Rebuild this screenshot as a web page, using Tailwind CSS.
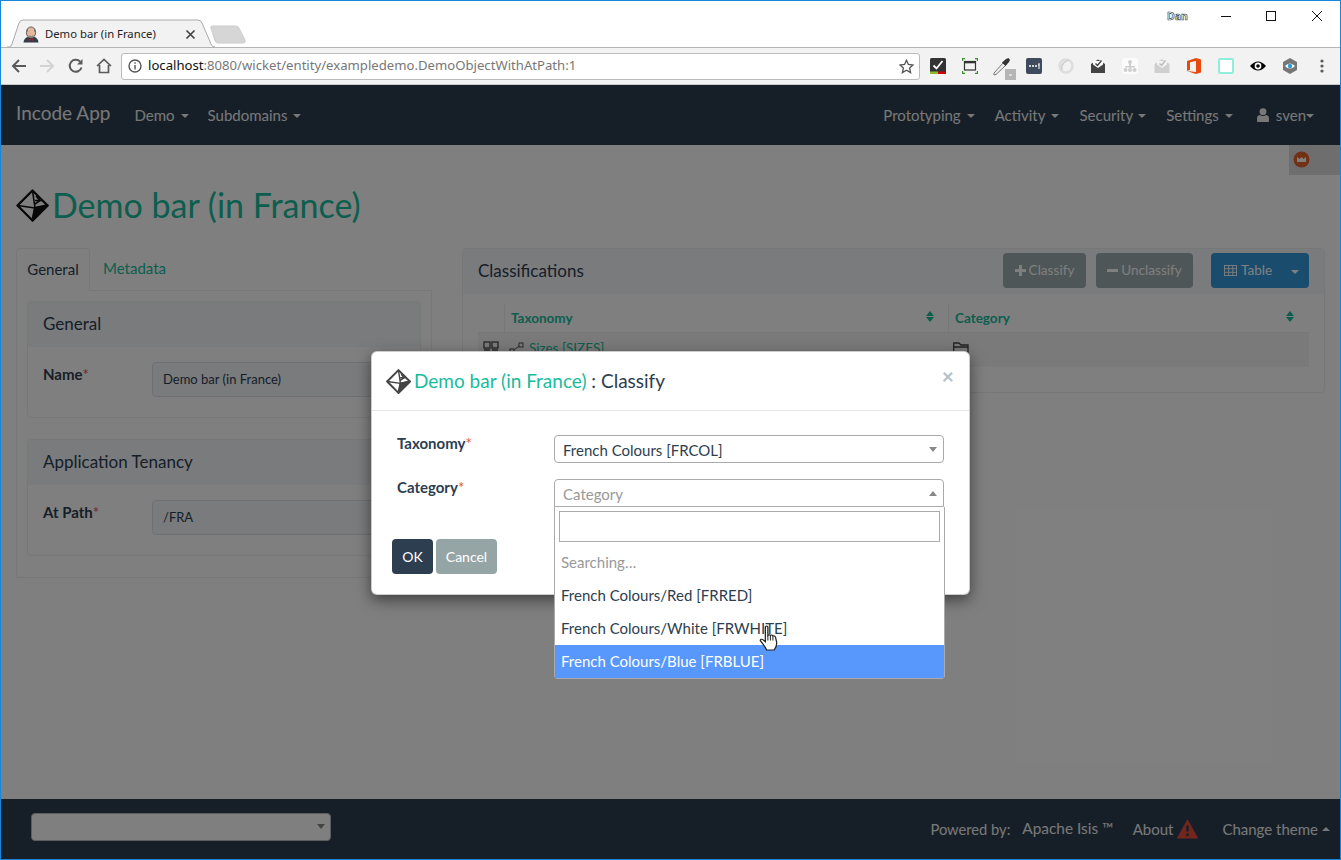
<!DOCTYPE html>
<html lang="en">
<head>
    <meta charset="UTF-8">
    <meta name="viewport" content="width=device-width, initial-scale=1.0">
    <title>Demo bar (in France)</title>
    <script src="https://cdn.jsdelivr.net/npm/@tailwindcss/browser@4"></script>
</head>
<body class="bg-white font-['Lato',sans-serif] text-[15px] text-[#2c3e50] overflow-hidden">

<div class="relative w-[1341px] h-[860px] border border-[#1a86d9] flex flex-col overflow-hidden">

    <!-- Browser title bar -->
    <div class="relative h-[47px] bg-white shrink-0 border-b border-[#b4b4b4]">
        <svg class="absolute left-[6px] top-[18px]" width="240" height="30" viewBox="0 0 240 30">
            <path d="M0 28 L2 28 Q4 28 5 25 L12 4 Q13 1 16 1 L191 1 Q194 1 195 4 L204 25 Q205 28 208 28" fill="#f2f2f2" stroke="#aaa" stroke-width="1"/>
            <path d="M204 9 Q203 7 206 7 L228 7 Q231 7 232 9 L238 21 Q239 24 236 24 L211 24 Q209 24 208 22 Z" fill="#d6d6d6" stroke="#ccc"/>
        </svg>
        <!-- favicon -->
        <svg class="absolute left-[22px] top-[25px]" width="16" height="17" viewBox="0 0 16 17">
            <path d="M0.5 16.5 Q1 12 4.5 11 L11.5 11 Q15 12 15.5 16.5 Z" fill="#2f3c4c"/>
            <ellipse cx="8" cy="6.5" rx="4.6" ry="5.6" fill="#e3b79c" stroke="#444" stroke-width=".8"/>
            <path d="M3.4 7 Q3 3 5 2 L5 5 Z M12.6 7 Q13 3 11 2 L11 5 Z" fill="#777"/>
            <path d="M5.5 9 Q8 11 10.5 9 L10 11.5 L6 11.5 Z" fill="#8d8078"/>
            <path d="M5.5 12.5 L8 13.6 L10.5 12.5 L10.5 15 L8 14 L5.5 15 Z" fill="#b02020"/>
        </svg>
        <span class="absolute left-[44px] top-[25px] font-['Noto_Sans',sans-serif] text-[11.3px] leading-[16px] text-[#222]">Demo bar (in France)</span>
        <svg class="absolute left-[184px] top-[28px]" width="11" height="11" viewBox="0 0 11 11"><path d="M1.5 1.5 L9.5 9.5 M9.5 1.5 L1.5 9.5" stroke="#444" stroke-width="1.7"/></svg>

        <!-- window controls -->
        <span class="absolute left-[1166px] top-[8px] text-[10.5px] leading-[14px] font-['Noto_Sans',sans-serif] font-bold text-white [-webkit-text-stroke:0.6px_#333]">Dan</span>
        <svg class="absolute left-[1220px] top-[9px]" width="102" height="12" viewBox="0 0 102 12" fill="none" stroke="#111">
            <path d="M0 6.5 H10"/>
            <rect x="45.5" y="1.5" width="9" height="9"/>
            <path d="M91 1 L101 11 M101 1 L91 11"/>
        </svg>
    </div>

    <!-- Browser toolbar -->
    <div class="h-[37px] bg-[#f2f2f2] shrink-0 border-b border-[#c8c8c8] flex items-center">
        <div class="w-[120px] flex items-center shrink-0">
            <svg class="ml-[10px]" width="16" height="16" viewBox="0 0 16 16" fill="none" stroke="#5a5a5a" stroke-width="2"><path d="M15 8 H2 M8 2 L2 8 L8 14"/></svg>
            <svg class="ml-[12px]" width="16" height="16" viewBox="0 0 16 16" fill="none" stroke="#d3d3d3" stroke-width="2"><path d="M1 8 H14 M8 2 L14 8 L8 14"/></svg>
            <svg class="ml-[13px]" width="16" height="16" viewBox="0 0 16 16" fill="none" stroke="#5a5a5a" stroke-width="2"><path d="M13.5 9.5 A6 6 0 1 1 12 3.5"/><path d="M14.5 1 V6.5 H9" fill="#5a5a5a" stroke="none"/></svg>
            <svg class="ml-[12px]" width="16" height="16" viewBox="0 0 16 16" fill="none" stroke="#5a5a5a" stroke-width="1.7"><path d="M1 8 L8 1.5 L15 8 M3.5 7 V14.5 H12.5 V7"/></svg>
        </div>
        <div class="w-[799px] h-[27px] bg-white border border-[#bbb] rounded-[3px] flex items-center shrink-0 font-['Noto_Sans',sans-serif] text-[13.15px] relative">
            <svg class="ml-[6px]" width="14" height="14" viewBox="0 0 14 14" fill="none" stroke="#555" stroke-width="1.4"><circle cx="7" cy="7" r="6"/><path d="M7 6 V10.5 M7 3.2 V4.8"/></svg>
            <span class="ml-[6px] text-[#111]">localhost<span class="text-[#777]">:8080/wicket/entity/exampledemo.DemoObjectWithAtPath:1</span></span>
            <svg class="absolute right-[5px] top-[5px]" width="15" height="15" viewBox="0 0 15 15" fill="none" stroke="#555" stroke-width="1.3"><path d="M7.5 1.2 L9.4 5.5 L14 6 L10.6 9 L11.6 13.6 L7.5 11.2 L3.4 13.6 L4.4 9 L1 6 L5.6 5.5 Z"/></svg>
        </div>
        <div class="flex items-center ml-[2px]">
            <!-- extension icons, 32px apart -->
            <div class="w-8 flex justify-center"><svg width="16" height="16" viewBox="0 0 16 16"><rect width="16" height="16" rx="1.5" fill="#333"/><rect y="13.5" width="8" height="2.5" fill="#8db92e"/><rect x="8" y="13.5" width="8" height="2.5" fill="#c00"/><path d="M3.5 7.5 L6.5 10.5 L12.5 3" fill="none" stroke="#fff" stroke-width="1.8"/></svg></div>
            <div class="w-8 flex justify-center"><svg width="16" height="16" viewBox="0 0 16 16" fill="none"><path d="M0.5 3 V0.5 H3 M13 0.5 H15.5 V3 M15.5 13 V15.5 H13 M3 15.5 H0.5 V13" stroke="#3b8e2e" stroke-width="1.3"/><rect x="2.5" y="3.5" width="11" height="8.5" stroke="#333" stroke-width="1.2"/><path d="M2.5 4.5 H13.5" stroke="#333" stroke-width="1.6"/></svg></div>
            <div class="w-8 h-[16px] flex justify-center items-center"><svg class="shrink-0" width="28" height="28" viewBox="0 0 28 28" fill="none"><path d="M6 21 L15 11 L17.5 13.5 L8 22.5 L6 23 Z" fill="#eee" stroke="#777"/><path d="M14 10.5 L18 7 L20.5 6 L22 8 L21 10 L17.5 14 Z" fill="#333"/><rect x="17" y="17" width="11" height="11" fill="#b5b5b5"/><path d="M21 23 H24" stroke="#fff"/></svg></div>
            <div class="w-8 flex justify-center"><svg width="16" height="16" viewBox="0 0 16 16"><rect width="16" height="16" rx="2" fill="#3d4b5c"/><circle cx="4" cy="8" r="1" fill="#fff"/><circle cx="7" cy="8" r="1" fill="#fff"/><circle cx="10" cy="8" r="1" fill="#fff"/><path d="M12 7 H13.5 M13 5 V11" stroke="#fff"/></svg></div>
            <div class="w-8 flex justify-center"><svg width="16" height="16" viewBox="0 0 16 16" fill="none"><circle cx="8" cy="8" r="6.5" stroke="#ddd" stroke-width="2.4"/><path d="M4 12 Q2 5 11 2" stroke="#cfcfcf" stroke-width="1.5"/></svg></div>
            <div class="w-8 flex justify-center"><svg width="16" height="16" viewBox="0 0 16 16"><path d="M1 6 L8 1.5 L15 6 V15 H1 Z" fill="#444"/><path d="M3 6.5 L8 10 L13 6.5 L13 3 H3 Z" fill="#fff"/><path d="M5.5 5.5 L7.5 7.5 L11.5 2.5" fill="none" stroke="#444" stroke-width="1.4"/></svg></div>
            <div class="w-8 flex justify-center"><svg width="16" height="16" viewBox="0 0 16 16"><rect width="16" height="16" rx="2.5" fill="#fbfbfb"/><g fill="#cfcfcf"><circle cx="8" cy="4" r="2"/><rect x="7" y="5" width="2" height="5"/><rect x="3" y="8" width="10" height="1.5"/><circle cx="3.5" cy="12" r="2"/><circle cx="8" cy="12" r="2"/><circle cx="12.5" cy="12" r="2"/></g></svg></div>
            <div class="w-8 flex justify-center"><svg width="16" height="16" viewBox="0 0 16 16"><path d="M0.5 6 L8 1 L15.5 6 V15 H0.5 Z" fill="#cfcfcf"/><path d="M3 6.5 L8 10 L13 6.5 L13 3 H3 Z" fill="#f2f2f2"/><path d="M5.5 5.5 L7.5 7.5 L11.5 2.5" fill="none" stroke="#bbb" stroke-width="1.4"/></svg></div>
            <div class="w-8 flex justify-center"><svg width="14" height="16" viewBox="0 0 14 16"><path d="M0 3 L9 0 L14 1.5 V14.5 L9 16 L0 13 L9 14 V3 L3 4.3 V11.7 L0 13 Z" fill="#e64a0c"/></svg></div>
            <div class="w-8 flex justify-center"><div class="w-4 h-4 bg-white border-2 border-[#90efdc] rounded-[2px]"></div></div>
            <div class="w-8 flex justify-center"><svg width="16" height="16" viewBox="0 0 16 16"><path d="M0 8 Q8 -1 16 8 Q8 17 0 8 Z" fill="#000"/><circle cx="8" cy="8" r="3.4" fill="#fff"/><circle cx="8" cy="8" r="1.8" fill="#000"/></svg></div>
            <div class="w-8 flex justify-center"><svg width="16" height="16" viewBox="0 0 16 16"><path d="M8 0 L15 4 V12 L8 16 L1 12 V4 Z" fill="#777"/><path d="M3 8 Q8 3 13 8 Q8 13 3 8 Z" fill="#fff"/><circle cx="8" cy="8" r="2.2" fill="#2a9fd6"/></svg></div>
            <div class="w-8 flex justify-center"><svg width="4" height="14" viewBox="0 0 4 14" fill="#5a5a5a"><circle cx="2" cy="2" r="1.6"/><circle cx="2" cy="7" r="1.6"/><circle cx="2" cy="12" r="1.6"/></svg></div>
        </div>
    </div>

    <!-- App -->
    <div class="relative flex-1 flex flex-col min-h-0 bg-white">

        <!-- Navbar -->
        <nav class="h-[60px] bg-[#2c3e50] shrink-0 flex items-center text-[#f0f0f0] pl-[15px] pr-[26px]">
            <span class="text-[19px] mr-[24px] -mt-[4px]">Incode App</span>
            <div class="flex gap-[19px]">
                <span class="flex items-center">Demo<i class="ml-[6px] mt-[2px] border-x-[4px] border-x-transparent border-t-[4px] border-t-current"></i></span>
                <span class="flex items-center">Subdomains<i class="ml-[6px] mt-[2px] border-x-[4px] border-x-transparent border-t-[4px] border-t-current"></i></span>
            </div>
            <div class="ml-auto flex gap-[20px] items-center">
                <span class="flex items-center">Prototyping<i class="ml-[6px] mt-[2px] border-x-[4px] border-x-transparent border-t-[4px] border-t-current"></i></span>
                <span class="flex items-center">Activity<i class="ml-[6px] mt-[2px] border-x-[4px] border-x-transparent border-t-[4px] border-t-current"></i></span>
                <span class="flex items-center">Security<i class="ml-[5px] mt-[2px] border-x-[4px] border-x-transparent border-t-[4px] border-t-current"></i></span>
                <span class="flex items-center">Settings<i class="ml-[6px] mt-[2px] border-x-[4px] border-x-transparent border-t-[4px] border-t-current"></i></span>
                <span class="flex items-center ml-[4px]">
                    <svg class="mr-[7px]" width="12" height="14" viewBox="0 0 11 13" fill="currentColor"><circle cx="5.5" cy="3.4" r="3.2"/><path d="M0 13 V9.5 Q0 7 2.5 6.5 Q5.5 8.5 8.5 6.5 Q11 7 11 9.5 V13 Z"/></svg>
                    sven<i class="mt-[2px] border-x-[4px] border-x-transparent border-t-[4px] border-t-current"></i>
                </span>
            </div>
        </nav>

        <!-- Page -->
        <main class="flex-1 relative min-h-0 px-[15px]">
            <div class="absolute right-0 top-0 w-[51px] h-[30px] bg-[#dcdcdc] pl-[4px] pt-[6px]">
                <svg width="17" height="17" viewBox="0 0 17 17"><circle cx="8.5" cy="8.5" r="8" fill="#e2622a"/><path d="M4 6 L6.5 8 L8.5 6 L10.5 8 L13 6 V11 H4 Z" fill="#fff"/></svg>
            </div>

            <div class="flex items-center h-[34px] mt-[43px] gap-[3px]">
                <svg width="33" height="33" viewBox="0 0 33 33" fill="none" stroke="#111" stroke-width="2.3" stroke-linejoin="round">
                    <path d="M16.5 1.5 L31.5 16.5 L16.5 31.5 L1.5 16.5 Z"/>
                    <path d="M16.5 1.5 L19 19 L16.5 31.5 M1.5 16.5 L19 19 L31.5 16.5 M19 11.5 L26 11.5 M20 7 L24 11.5 L19 15" stroke-width="1.6"/>
                    <path d="M19 19 L31.5 16.5 L16.5 31.5 Z" fill="#111"/>
                </svg>
                <h1 class="text-[34px] leading-none text-[#18bc9c]">Demo bar (in France)</h1>
            </div>

            <div class="flex mt-[26px] items-start">
                <!-- Left column -->
                <div class="w-[416px] shrink-0">
                    <div class="flex h-[42px]">
                        <div class="w-[74px] h-[43px] pb-[2px] relative bg-white border border-[#ecf0f1] border-b-0 rounded-t-[4px] flex items-center justify-center">General</div>
                        <div class="ml-[13px] pb-[2px] flex items-center text-[#18bc9c]">Metadata</div>
                    </div>
                    <div class="border border-[#ecf0f1] p-[10px] h-[288px]">
                        <section class="border border-[#ecf0f1] rounded-[4px] h-[117px]">
                            <div class="h-[45px] bg-[#f4f6fb] rounded-t-[4px] flex items-center px-[15px] pb-[2px] text-[17px]">General</div>
                            <div class="flex pl-[15px] pt-[15px]">
                                <label class="w-[109px] pt-[1px] font-bold">Name<span class="text-[#e74c3c] font-normal">*</span></label>
                                <div class="w-[240px] h-[35px] pt-[1px] bg-[#f4f6fb] border border-[#dce0ea] rounded-[4px] flex items-center px-[10px] text-[13px]">Demo bar (in France)</div>
                            </div>
                        </section>
                        <section class="border border-[#ecf0f1] rounded-[4px] h-[117px] mt-[21px]">
                            <div class="h-[45px] bg-[#f4f6fb] rounded-t-[4px] flex items-center px-[15px] pb-[2px] text-[17px]">Application Tenancy</div>
                            <div class="flex pl-[15px] pt-[15px]">
                                <label class="w-[109px] pt-[1px] font-bold">At Path<span class="text-[#e74c3c] font-normal">*</span></label>
                                <div class="w-[240px] h-[35px] pt-[1px] bg-[#f4f6fb] border border-[#dce0ea] rounded-[4px] flex items-center px-[10px] text-[13px]">/FRA</div>
                            </div>
                        </section>
                    </div>
                </div>

                <!-- Right column -->
                <div class="w-[863px] ml-[30px] h-[145px] border border-[#ecf0f1] rounded-[4px]">
                    <div class="h-[45px] bg-[#f4f6fb] rounded-t-[4px] flex items-center pl-[15px] pr-[15px] pb-[2px] text-[17px]">
                        <span>Classifications</span>
                        <div class="ml-auto flex items-center text-[13.6px] text-white">
                            <span class="w-[83px] h-[35px] bg-[#95a5a6] rounded-[4px] flex items-center justify-center opacity-90 gap-[3px]">
                                <svg width="11" height="11" viewBox="0 0 11 11" fill="currentColor"><path d="M4 0 H7 V4 H11 V7 H7 V11 H4 V7 H0 V4 H4 Z"/></svg>Classify</span>
                            <span class="w-[97px] h-[35px] ml-[10px] bg-[#95a5a6] rounded-[4px] flex items-center justify-center opacity-90 gap-[3px]">
                                <svg width="11" height="11" viewBox="0 0 11 11" fill="currentColor"><path d="M0 4 H11 V7 H0 Z"/></svg>Unclassify</span>
                            <span class="w-[98px] h-[35px] ml-[18px] bg-[#3498db] rounded-[4px] flex items-center pl-[13px]">
                                <svg class="mr-[4px]" width="13" height="11" viewBox="0 0 14 12" fill="none" stroke="currentColor"><rect x=".5" y=".5" width="13" height="11"/><path d="M.5 4 H13.5 M.5 8 H13.5 M5 .5 V11.5 M9.5 .5 V11.5"/></svg>
                                Table
                                <i class="ml-auto mr-[10px] mt-[2px] border-x-[4px] border-x-transparent border-t-[4px] border-t-current"></i>
                            </span>
                        </div>
                    </div>
                    <div class="px-[15px] pt-[10px]">
                        <div class="grid grid-cols-[26px_444px_359px] h-[29px] border-b border-[#ecf0f1] text-[13.5px] font-bold text-[#18bc9c]">
                            <div></div>
                            <div class="border-l border-[#ecf0f1] pl-[6px] pr-[14px] flex items-center justify-between">Taxonomy
                                <span class="flex flex-col gap-[1px] -mt-[4px]"><i class="border-x-[4px] border-x-transparent border-b-[5px] border-b-current"></i><i class="border-x-[4px] border-x-transparent border-t-[5px] border-t-current"></i></span>
                            </div>
                            <div class="border-l border-[#ecf0f1] pl-[6px] pr-[13px] flex items-center justify-between">Category
                                <span class="flex flex-col gap-[1px] -mt-[4px]"><i class="border-x-[4px] border-x-transparent border-b-[5px] border-b-current"></i><i class="border-x-[4px] border-x-transparent border-t-[5px] border-t-current"></i></span>
                            </div>
                        </div>
                        <div class="grid grid-cols-[26px_444px_359px] h-[34px] bg-[#f5f5f5] text-[13.5px] text-[#18bc9c]">
                            <div class="pl-[5px] pt-[8px]"><svg width="16" height="12" viewBox="0 0 16 12" fill="none" stroke="#555" stroke-width="1.4"><rect x="1" y="1" width="6" height="6"/><rect x="9" y="1" width="6" height="6"/><path d="M1 9 H7 M9 9 H15 M1 11 H7 M9 11 H15"/></svg></div>
                            <div class="pl-[5px] pt-[5px] flex items-start gap-[4px]"><svg class="mt-[4px]" width="16" height="12" viewBox="0 0 16 12" fill="none" stroke="#555"><rect x="1" y="7" width="4" height="4"/><rect x="10" y="1" width="4" height="4"/><path d="M5 8 L10 4"/></svg>Sizes [SIZES]</div>
                            <div class="pl-[5px] pt-[9px]"><svg width="16" height="13" viewBox="0 0 16 13" fill="none" stroke="#444" stroke-width="1.3"><path d="M.7 12 V1 H6 L8 3 H15 V12 Z M.7 5 H15"/></svg></div>
                        </div>
                    </div>
                </div>
            </div>
        </main>

        <!-- Footer -->
        <footer class="h-[60px] bg-[#2c3e50] shrink-0 flex items-center text-[#f0f0f0] pl-[30px] pr-[10px]">
            <div class="w-[300px] h-[28px] -mt-[5px] bg-white border border-[#bbb] rounded-[4px] flex items-center justify-end pr-[5px]">
                <i class="border-x-[4px] border-x-transparent border-t-[5px] border-t-[#888]"></i>
            </div>
            <div class="ml-auto flex items-center">
                <span class="text-[14.7px]">Powered by:</span>
                <span class="ml-[12px] text-[15.4px]">Apache Isis ™</span>
                <span class="ml-[19px]">About</span>
                <svg class="ml-[4px]" width="21" height="20" viewBox="0 0 21 20"><path d="M10.5 1 L20.5 19 H.5 Z" fill="#e74c3c" stroke="#e74c3c" stroke-linejoin="round"/><path d="M10.5 6.5 V12.5 M10.5 14.5 V17" stroke="#2c3e50" stroke-width="2.4"/></svg>
                <span class="ml-[24px]">Change theme</span>
                <i class="ml-[4px] border-x-[4px] border-x-transparent border-b-[4px] border-b-current"></i>
            </div>
        </footer>

        <!-- Modal backdrop -->
        <div class="absolute inset-0 bg-black/50"></div>

        <!-- Modal -->
        <div class="absolute left-[370px] top-[266px] w-[599px] h-[244px] bg-white rounded-[6px] shadow-[0_5px_15px_rgba(0,0,0,0.5)] border border-black/20">
            <div class="h-[59px] border-b border-[#e5e5e5] flex items-center pl-[14px] relative">
                <svg width="25" height="25" viewBox="0 0 33 33" fill="none" stroke="#444" stroke-width="2.6" stroke-linejoin="round">
                    <path d="M16.5 1.5 L31.5 16.5 L16.5 31.5 L1.5 16.5 Z"/>
                    <path d="M16.5 1.5 L19 19 L16.5 31.5 M1.5 16.5 L19 19 L31.5 16.5 M19 11.5 L26 11.5 M20 7 L24 11.5 L19 15" stroke-width="1.8"/>
                    <path d="M19 19 L31.5 16.5 L16.5 31.5 Z" fill="#444"/>
                </svg>
                <h4 class="ml-[3px] text-[19px]"><span class="text-[#18bc9c]">Demo bar (in France)</span> : Classify</h4>
                <span class="absolute right-[15px] top-[11px] text-[21px] leading-[26px] font-bold text-[#b4c0c8]">×</span>
            </div>
            <div class="pl-[25px] pt-[24px] flex flex-col gap-[16px]">
                <div class="flex">
                    <label class="w-[157px] font-bold -mt-[3px]">Taxonomy<span class="text-[#e74c3c] font-normal">*</span></label>
                    <div class="w-[390px] h-[28px] border border-[#aaa] rounded-[4px] flex items-center justify-between pl-[8px] pr-[6px]"><span class="mt-[2px]">French Colours [FRCOL]</span>
                        <i class="border-x-[4px] border-x-transparent border-t-[5px] border-t-[#888]"></i>
                    </div>
                </div>
                <div class="flex">
                    <label class="w-[157px] font-bold -mt-[3px]">Category<span class="text-[#e74c3c] font-normal">*</span></label>
                    <div class="w-[390px] h-[28px] border border-[#aaa] rounded-t-[4px] flex items-center justify-between pl-[8px] pr-[6px] text-[#999]"><span class="mt-[2px]">Category</span>
                        <i class="border-x-[4px] border-x-transparent border-b-[5px] border-b-[#888]"></i>
                    </div>
                </div>
            </div>
            <div class="pl-[20px] mt-[32px] flex gap-[3px] text-[14px] text-white">
                <span class="w-[41px] h-[35px] bg-[#2c3e50] rounded-[4px] flex items-center justify-center">OK</span>
                <span class="w-[61px] h-[35px] bg-[#95a5a6] rounded-[4px] flex items-center justify-center">Cancel</span>
            </div>
        </div>

        <!-- Open select dropdown -->
        <div class="absolute left-[553px] top-[422px] w-[391px] h-[172px] bg-white border border-[#aaa] border-t-0 rounded-b-[4px]">
            <div class="mx-[4px] mt-[4px] h-[31px] border border-[#aaa]"></div>
            <div class="h-[33px] mt-[4px] pl-[6px] flex items-center text-[#999]">Searching…</div>
            <div class="h-[33px] pl-[6px] flex items-center">French Colours/Red [FRRED]</div>
            <div class="h-[33px] pl-[6px] flex items-center">French Colours/White [FRWHITE]</div>
            <div class="h-[33px] pl-[6px] flex items-center bg-[#5897fb] text-white">French Colours/Blue [FRBLUE]</div>
        </div>

        <!-- Mouse cursor -->
        <svg class="absolute left-[758px] top-[540px]" width="19" height="26" viewBox="0 0 15 25" preserveAspectRatio="none">
            <path d="M5 2 Q6 0 7 2 V10 Q8 9 9 10 Q10 9 11 10.5 Q12 10 13 11.5 L14 17 Q14 21 12 24 H6 Q5 21 1 15 Q1 13 3 14 L5 16 Z" fill="#fff" stroke="#222" stroke-width="1"/>
            <path d="M7 10 V15 M9 10 V15 M11 10.5 V15" stroke="#222" stroke-width=".8"/>
        </svg>
    </div>
</div>

</body>
</html>
